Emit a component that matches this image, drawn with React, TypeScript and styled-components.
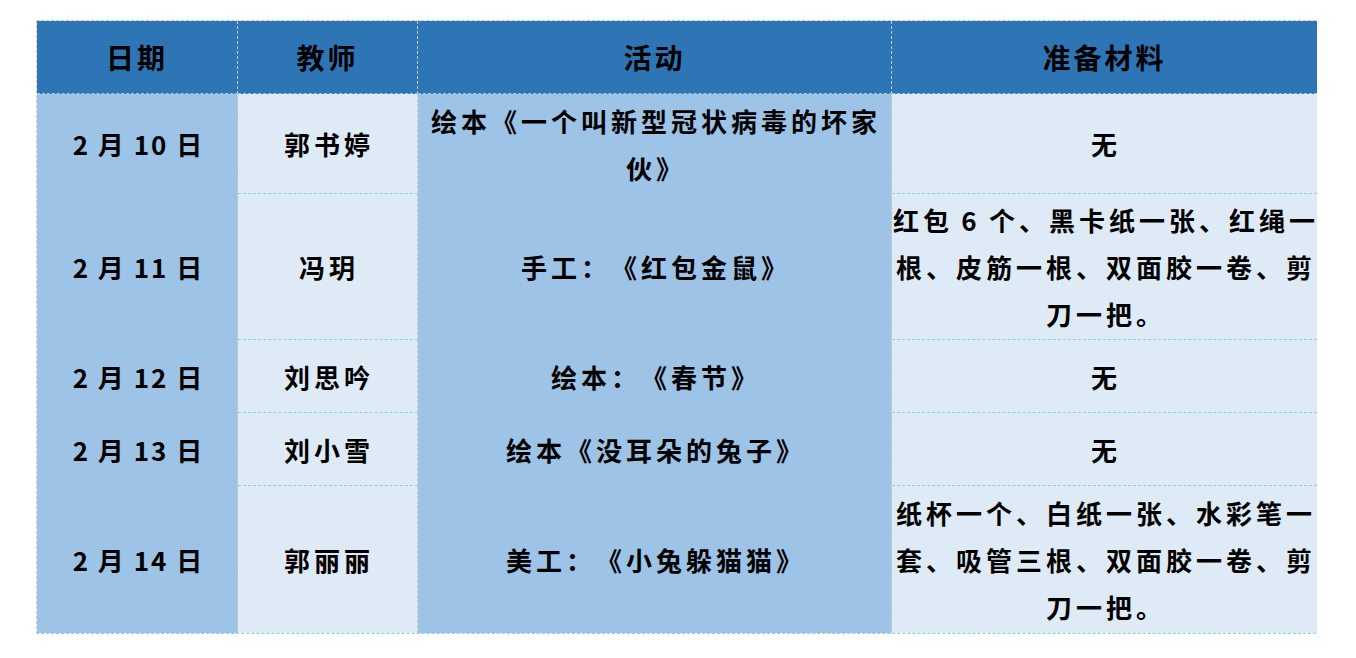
import React from 'react'
import styled, { createGlobalStyle } from 'styled-components'

const GlobalStyle = createGlobalStyle`
  html, body {
    margin: 0;
    padding: 0;
    background: #ffffff;
  }
  body {
    font-family: "Noto Sans CJK SC", "Noto Sans", sans-serif;
    color: #000000;
    text-spacing-trim: space-all;
  }
`

type Row = {
  date: string
  teacher: string
  activity: string[]
  material: string[]
  height: number
}

const rows: Row[] = [
  {
    date: '2 月 10 日',
    teacher: '郭书婷',
    activity: ['绘本《一个叫新型冠状病毒的坏家', '伙》'],
    material: ['无'],
    height: 100,
  },
  {
    date: '2 月 11 日',
    teacher: '冯玥',
    activity: ['手工：《红包金鼠》'],
    material: ['红包\u20066\u2006个、黑卡纸一张、红绳一', '根、皮筋一根、双面胶一卷、剪', '刀一把。'],
    height: 146,
  },
  {
    date: '2 月 12 日',
    teacher: '刘思吟',
    activity: ['绘本：《春节》'],
    material: ['无'],
    height: 73,
  },
  {
    date: '2 月 13 日',
    teacher: '刘小雪',
    activity: ['绘本《没耳朵的兔子》'],
    material: ['无'],
    height: 73,
  },
  {
    date: '2 月 14 日',
    teacher: '郭丽丽',
    activity: ['美工：《小兔躲猫猫》'],
    material: ['纸杯一个、白纸一张、水彩笔一', '套、吸管三根、双面胶一卷、剪', '刀一把。'],
    height: 147,
  },
]

const Page = styled.div`
  padding: 20px 0 0 36px;
`

const Table = styled.div<{ $rows: string }>`
  display: grid;
  grid-template-columns: 201px 180px 474px 425px;
  grid-template-rows: ${(p) => p.$rows};
  width: 1280px;
  border-top: 1px dashed #a9c9e6;
  border-left: 1px dashed #c9c9c9;
  border-right: 1px dashed #c9c9c9;
  border-bottom: 1px dashed #8fd0d2;
  box-sizing: border-box;
`

const HeadCell = styled.div<{ $last?: boolean }>`
  display: flex;
  align-items: center;
  justify-content: center;
  background: #2e75b6;
  font-size: 28px;
  font-weight: 600;
  letter-spacing: 3px;
  border-right: ${(p) => (p.$last ? 'none' : '1px dashed #c9c9c9')};
  border-bottom: 1px dashed #8fd0d2;
  box-sizing: border-box;
`

const Cell = styled.div<{ $tone: 'deep' | 'light'; $line?: boolean; $last?: boolean }>`
  display: flex;
  flex-direction: column;
  align-items: center;
  justify-content: center;
  background: ${(p) => (p.$tone === 'deep' ? '#9dc3e6' : '#deeaf6')};
  border-right: ${(p) => (p.$last ? 'none' : '1px dashed #c9c9c9')};
  border-bottom: ${(p) => (p.$line ? '1px dashed #8fd0d2' : '1px solid transparent')};
  box-sizing: border-box;
  font-size: 26px;
  font-weight: 600;
  letter-spacing: 4px;
  line-height: 47px;
  text-align: center;
  white-space: nowrap;
  padding-left: 3px;
`

const DateText = styled.span`
  letter-spacing: 2px;
`

const Line = styled.span`
  display: block;
`

export default function App() {
  const template = ['73px', ...rows.map((r) => `${r.height}px`)].join(' ')
  return (
    <Page>
      <GlobalStyle />
      <Table $rows={template}>
        <HeadCell>日期</HeadCell>
        <HeadCell>教师</HeadCell>
        <HeadCell>活动</HeadCell>
        <HeadCell $last>准备材料</HeadCell>
        {rows.map((r, i) => {
          const notLast = i < rows.length - 1
          return (
            <React.Fragment key={r.date}>
              <Cell $tone="deep">
                <DateText>{r.date}</DateText>
              </Cell>
              <Cell $tone="light" $line={notLast}>
                {r.teacher}
              </Cell>
              <Cell $tone="deep">
                {r.activity.map((t) => (
                  <Line key={t}>{t}</Line>
                ))}
              </Cell>
              <Cell $tone="light" $line={notLast} $last>
                {r.material.map((t) => (
                  <Line key={t}>{t}</Line>
                ))}
              </Cell>
            </React.Fragment>
          )
        })}
      </Table>
    </Page>
  )
}
